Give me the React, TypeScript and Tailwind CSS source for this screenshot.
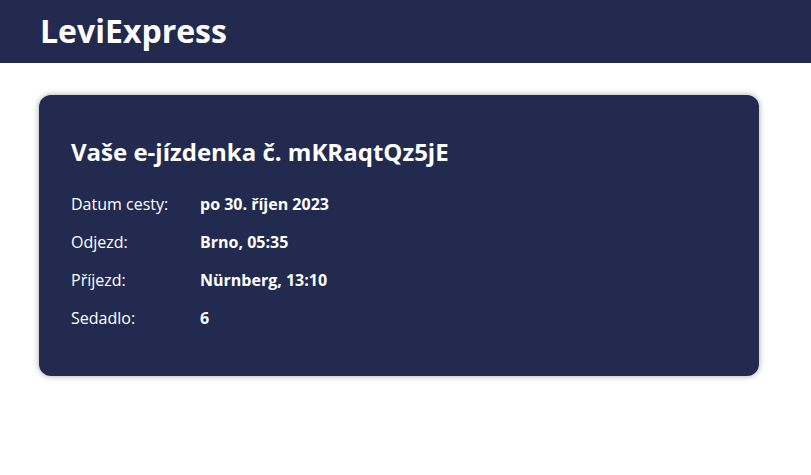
const rows = [
  { label: "Datum cesty:", value: "po 30. říjen 2023" },
  { label: "Odjezd:", value: "Brno, 05:35" },
  { label: "Příjezd:", value: "Nürnberg, 13:10" },
  { label: "Sedadlo:", value: "6" },
];

export default function App() {
  return (
    <div
      className="min-h-screen bg-white"
      style={{ fontFamily: '"Open Sans", "Noto Sans", sans-serif' }}
    >
      <header className="h-[63px] bg-[#232a4f] px-10 flex items-center">
        <h1 className="text-[32px] font-bold text-white leading-none -mt-[2px]">LeviExpress</h1>
      </header>

      <main className="px-[39px] pt-[32px]">
        <div className="w-[720px] rounded-xl bg-[#232a4f] px-8 pt-[41px] pb-[47px] text-white shadow-[0_0_6px_rgba(0,0,0,0.35)]">
          <h2 className="text-[24px] font-bold leading-[32px]">
            Vaše e-jízdenka č. mKRaqtQz5jE
          </h2>
          <div className="mt-[25px] flex flex-col gap-[16px]">
            {rows.map((row) => (
              <div key={row.label} className="flex text-[16px] leading-[22px]">
                <span className="w-[129px]">{row.label}</span>
                <span className="font-bold">{row.value}</span>
              </div>
            ))}
          </div>
        </div>
      </main>
    </div>
  );
}
